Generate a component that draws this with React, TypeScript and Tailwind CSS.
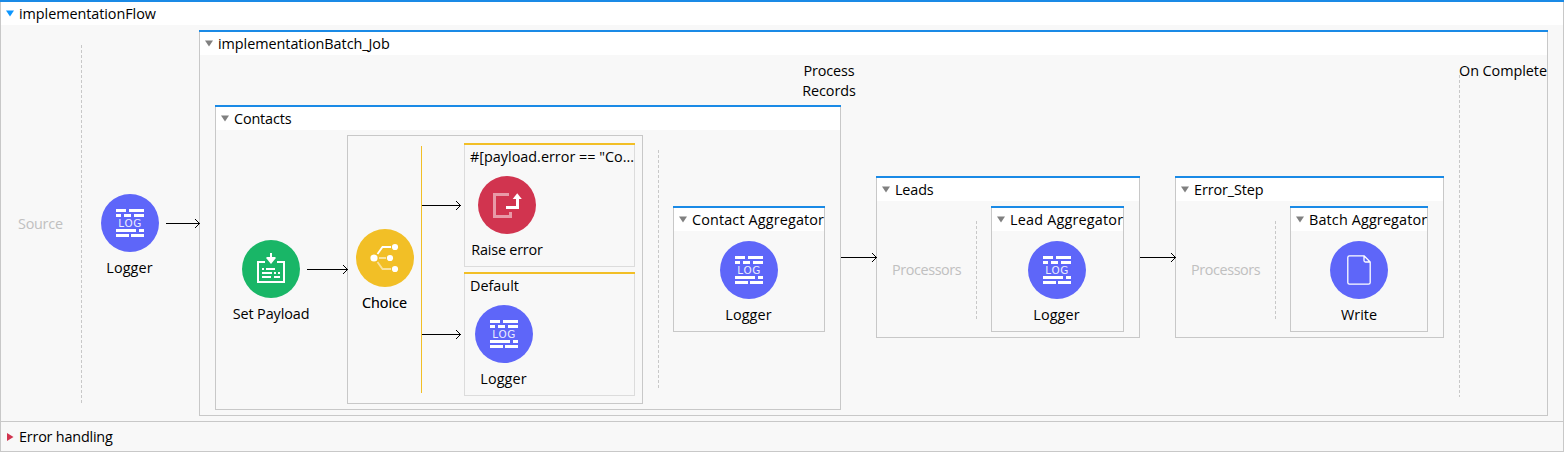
import type { ReactNode } from "react";

function Caret({ color = "#808080" }: { color?: string }) {
  return (
    <svg width="8" height="7" viewBox="0 0 8 7" className="shrink-0">
      <path d="M0 0.5H8L4 6.5Z" fill={color} />
    </svg>
  );
}

function Dashes({ className }: { className: string }) {
  return (
    <div
      className={`w-px shrink-0 bg-[repeating-linear-gradient(to_bottom,#c8c8c8_0px,#c8c8c8_3px,transparent_3px,transparent_5px)] ${className}`}
    />
  );
}

function Arrow({ length, className }: { length: number; className: string }) {
  return (
    <svg width={length} height="11" className={`relative z-10 shrink-0 ${className}`} fill="none" stroke="#000">
      <path d={`M0 5.5H${length}`} />
      <path d={`M${length - 5} 1L${length - 0.5} 5.5L${length - 5} 10`} strokeWidth="1" />
    </svg>
  );
}

function Panel({
  title,
  titleClass = "",
  caret,
  className,
  children,
}: {
  title: string;
  titleClass?: string;
  caret?: string;
  className: string;
  children: ReactNode;
}) {
  return (
    <section className={`flex shrink-0 flex-col bg-[#f8f8f8] ${className}`}>
      <div className="h-0.5 shrink-0 bg-[#1a8ae6]" />
      <div className="flex min-h-0 flex-1 flex-col border-x border-b border-[#c8c8c8]">
        <header className="flex h-[23px] shrink-0 items-center bg-white pl-[5px]">
          <Caret color={caret} />
          <span className={`ml-[5px] whitespace-nowrap leading-5 ${titleClass}`}>{title}</span>
        </header>
        <div className="flex min-h-0 flex-1 items-start">{children}</div>
      </div>
    </section>
  );
}

function Node({
  label,
  labelClass = "",
  fill,
  className = "",
  children,
}: {
  label: string;
  labelClass?: string;
  fill: string;
  className?: string;
  children: ReactNode;
}) {
  return (
    <div className={`flex w-[58px] shrink-0 flex-col items-center ${className}`}>
      <svg width="58" height="58" viewBox="0 0 58 58" fill="none">
        <circle cx="29" cy="29" r="29" fill={fill} />
        {children}
      </svg>
      <span className={`mt-1.5 whitespace-nowrap leading-5 ${labelClass}`}>{label}</span>
    </div>
  );
}

function Logger({ className }: { className?: string }) {
  return (
    <Node label="Logger" labelClass="-ml-px tracking-[0.1px]" fill="#5e66f9" className={className}>
      <path
        fill="#fff"
        d="M15 15h10v3H15zM28 15h15v3H28zM15 20h5v3h-5zM23 20h7v3h-7zM33 20h10v3H33zM15 35h20v3H15zM38 35h5v3h-5zM15 40h13v3H15zM30 40h13v3H30z"
      />
      <text
        x="17.3"
        y="32.8"
        fill="#ececfe"
        className="font-['DejaVu_Sans',sans-serif] text-[10.4px] tracking-[0.7px]"
      >
        LOG
      </text>
    </Node>
  );
}

function Branch({ title, className, children }: { title: string; className: string; children: ReactNode }) {
  return (
    <div className={`flex w-[171px] flex-col ${className}`}>
      <div className="h-0.5 shrink-0 bg-[#f2bf26]" />
      <div className="flex min-h-0 flex-1 flex-col items-start border-x border-b border-[#dcdcdc]">
        <span className="ml-[5px] mt-0.5 whitespace-nowrap leading-5">{title}</span>
        {children}
      </div>
    </div>
  );
}

export default function App() {
  return (
    <main className="flex h-[452px] w-[1564px] flex-col overflow-hidden bg-[#f8f8f8] font-['Open_Sans','Noto_Sans',sans-serif] text-[14.4px] text-black">
      <Panel title="implementationFlow" titleClass="tracking-[-0.06px]" caret="#0c96ff" className="h-[422px] w-full">
        <span className="ml-[17px] mt-[189px] w-11 leading-5 tracking-[-0.25px] text-[#c0c0c0]">Source</span>
        <Dashes className="ml-[19px] mt-5 h-[358px]" />
        <Logger className="ml-[19px] mt-[169px]" />
        <Arrow length={34} className="-mr-px ml-[7px] mt-[193px]" />

        <Panel title="implementationBatch_Job" titleClass="tracking-[-0.05px]" className="mt-[5px] h-[386px] w-[1349px]">
          <Panel title="Contacts" titleClass="tracking-[-0.15px]" className="ml-[15px] mt-[50px] h-[305px] w-[626px]">
            <Node label="Set Payload" labelClass="tracking-[-0.1px]" fill="#19b667" className="ml-[26px] mt-[110px]">
              <path stroke="#fff" strokeWidth="2" d="M23 22H16V42H42V22H35" />
              <path stroke="#fff" strokeWidth="2" d="M29 13V19" />
              <path fill="#fff" d="M24.5 17H33.5V18.5L29 24L24.5 18.5Z" />
              <path
                fill="#fff"
                d="M20 28h2v2h-2zM24 28h9v2h-9zM20 32h10v2H20zM32 32h2v2h-2zM36 32h2v2h-2zM20 36h9v2h-9zM32 36h6v2h-6z"
              />
            </Node>
            <Arrow length={41} className="-mr-px ml-[7px] mt-[134px]" />
            <div className="mt-[5px] flex h-[269px] w-[296px] shrink-0 items-start border border-[#c8c8c8]">
              <Node
                label="Choice"
                labelClass="-ml-px [text-shadow:0_0_0.6px_#00000080]"
                fill="#f2bf26"
                className="ml-2 mt-[93px]"
              >
                <g stroke="#fff" strokeWidth="1.8">
                  <path d="M21.5 25L26.5 18H35" />
                  <path strokeOpacity=".55" d="M21.5 33L26.5 40H35M23 29H30" />
                </g>
                <g fill="#fff">
                  <circle cx="18" cy="29" r="3.6" />
                  <circle cx="39" cy="18" r="3.1" />
                  <circle cx="34" cy="29" r="3.1" />
                  <circle cx="39" cy="40" r="3.1" />
                </g>
              </Node>
              <div className="ml-[7px] mt-[10px] h-[247px] w-px bg-[#f2bf26]" />
              <div className="flex flex-col">
                <Arrow length={39} className="mt-[64px]" />
                <Arrow length={39} className="mt-[118px]" />
              </div>
              <div className="ml-[3px] flex flex-col">
                <Branch title={'#[payload.error == "Co...'} className="mt-[7px] h-[124px]">
                  <Node label="Raise error" labelClass="tracking-[-0.2px]" fill="#d1344f" className="ml-[13px] mt-[9px]">
                    <path stroke="#fff" strokeOpacity=".5" strokeWidth="3" d="M31 18.5H16.5V40.5H32.5V36" />
                    <path stroke="#fff" strokeWidth="3" d="M28 31.5H39.5V22" />
                    <path fill="#fff" d="M34.7 23L39.2 17.2L43.8 23Z" />
                  </Node>
                </Branch>
                <Branch title="Default" className="mt-[5px] h-[124px]">
                  <Logger className="ml-2.5 mt-[9px]" />
                </Branch>
              </div>
            </div>
            <Dashes className="ml-[15px] mt-5 h-60" />
            <Panel
              title="Contact Aggregator"
              titleClass="tracking-[0.14px]"
              className="ml-3.5 mt-[76px] h-[126px] w-[152px]"
            >
              <Logger className="ml-[46px] mt-[10px]" />
            </Panel>
          </Panel>

          <div className="-ml-10 mt-[6px] w-14 shrink-0 text-center leading-5 tracking-[-0.1px]">
            Process Records
          </div>
          <Arrow length={36} className="-ml-4 -mr-px mt-[197px]" />

          <Panel title="Leads" titleClass="tracking-[-0.15px]" className="mt-[121px] h-[162px] w-[264px]">
            <span className="ml-[15px] mt-[59px] w-[69px] leading-5 tracking-[-0.4px] text-[#c0c0c0]">Processors</span>
            <Dashes className="ml-[15px] mt-5 h-[98px]" />
            <Panel
              title="Lead Aggregator"
              titleClass="tracking-[0.2px]"
              className="ml-3.5 mt-[5px] h-[126px] w-[133px]"
            >
              <Logger className="ml-9 mt-[10px]" />
            </Panel>
          </Panel>
          <Arrow length={36} className="-mr-px mt-[197px]" />

          <Panel title="Error_Step" titleClass="tracking-[-0.1px]" className="mt-[121px] h-[162px] w-[269px]">
            <span className="ml-[15px] mt-[59px] w-[69px] leading-5 tracking-[-0.4px] text-[#c0c0c0]">Processors</span>
            <Dashes className="ml-[15px] mt-5 h-[98px]" />
            <Panel
              title="Batch Aggregator"
              titleClass="tracking-[0.14px]"
              className="ml-3.5 mt-[5px] h-[126px] w-[138px]"
            >
              <Node label="Write" fill="#5e66f9" className="ml-[39px] mt-[10px]">
                <path
                  stroke="#fff"
                  strokeWidth="1.3"
                  strokeLinejoin="round"
                  d="M19.5 14.8H34L40.2 21V41.5Q40.2 43.2 38.5 43.2H19.5Q17.8 43.2 17.8 41.5V16.5Q17.8 14.8 19.5 14.8ZM34 14.8V19.5Q34 21 35.5 21H40.2"
                />
              </Node>
            </Panel>
          </Panel>

          <Dashes className="ml-[15px] mt-5 h-[322px]" />
          <span className="-ml-px mt-[6px] whitespace-nowrap leading-5 tracking-[-0.05px]">On Complete</span>
        </Panel>
      </Panel>

      <footer className="flex h-[30px] shrink-0 items-center border-x border-b border-[#c8c8c8] pl-1.5">
        <svg width="7" height="8" viewBox="0 0 7 8">
          <path d="M0 0L6.5 4L0 8Z" fill="#d1344f" />
        </svg>
        <span className="ml-[5px] leading-5 tracking-[-0.2px]">Error handling</span>
      </footer>
    </main>
  );
}
